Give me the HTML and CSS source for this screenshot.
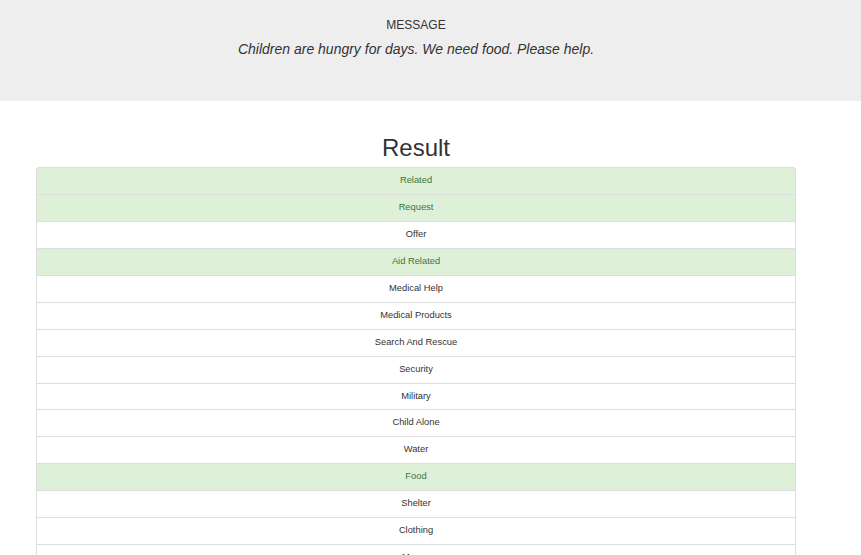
FILE: index.html
```html
<!DOCTYPE html>
<html>
<head>
<meta charset="utf-8">
<link rel="stylesheet" href="styles.css">
</head>
<body>
<header class="jumbotron">
  <div class="container">
    <div class="label">MESSAGE</div>
    <div class="message">Children are hungry for days. We need food. Please help.</div>
  </div>
</header>
<main class="container">
  <h1 class="title">Result</h1>
  <ul class="list-group">
    <li class="item success">Related</li>
    <li class="item success">Request</li>
    <li class="item">Offer</li>
    <li class="item success">Aid Related</li>
    <li class="item">Medical Help</li>
    <li class="item">Medical Products</li>
    <li class="item">Search And Rescue</li>
    <li class="item">Security</li>
    <li class="item">Military</li>
    <li class="item">Child Alone</li>
    <li class="item">Water</li>
    <li class="item success">Food</li>
    <li class="item">Shelter</li>
    <li class="item">Clothing</li>
    <li class="item">Money</li>
    <li class="item">Missing People</li>
  </ul>
</main>
</body>
</html>
```

FILE: styles.css
```css
html, body {
  margin: 0;
  padding: 0;
  background: #fff;
  font-family: "Liberation Sans", Arial, sans-serif;
  color: #333;
}
.container {
  width: 760px;
  margin-left: 36px;
}
.jumbotron {
  background: #eee;
  height: 101px;
  box-sizing: border-box;
  padding-top: 17px;
}
.label {
  font-size: 12px;
  line-height: 16px;
  text-align: center;
}
.message {
  margin-top: 6px;
  font-size: 14px;
  line-height: 20px;
  font-style: italic;
  text-align: center;
}
.title {
  margin: 34px 0 6px;
  font-size: 24px;
  line-height: 26px;
  font-weight: 500;
  text-align: center;
}
.list-group {
  list-style: none;
  margin: 0;
  padding: 0;
}
.item {
  font-size: 9.33px;
  line-height: 13.93px;
  padding: 6px 10px;
  text-align: center;
  background: #fff;
  border: 1px solid #ddd;
  margin-bottom: -1px;
}
.item:first-child {
  border-top-left-radius: 3px;
  border-top-right-radius: 3px;
}
.item.success {
  background: #dff0d8;
  color: #3c763d;
}
```
